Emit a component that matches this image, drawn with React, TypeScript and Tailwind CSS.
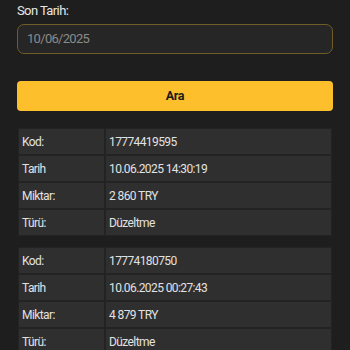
const records = [
  { kod: '17774419595', tarih: '10.06.2025 14:30:19', miktar: '2 860 TRY', turu: 'Düzeltme' },
  { kod: '17774180750', tarih: '10.06.2025 00:27:43', miktar: '4 879 TRY', turu: 'Düzeltme' },
];

function RecordTable({ r }: { r: (typeof records)[number] }) {
  const rows = [
    ['Kod:', r.kod],
    ['Tarih', r.tarih],
    ['Miktar:', r.miktar],
    ['Türü:', r.turu],
  ];
  return (
    <div className="mx-[18px] grid grid-cols-[85px_1fr] gap-[2px] bg-[#232323] p-[1px]">
      {rows.map(([label, value]) => (
        <div key={label} className="contents">
          <div className="flex h-[25px] items-center bg-[#2f2f2f] pl-[3px] text-[12px] tracking-[-0.6px] text-[#e2e2e2]">{label}</div>
          <div className="flex h-[25px] items-center bg-[#2f2f2f] pl-[3px] text-[12px] tracking-[-0.6px] text-[#e2e2e2]">{value}</div>
        </div>
      ))}
    </div>
  );
}

export default function App() {
  return (
    <div className="min-h-screen bg-[#1e1e1e] pt-[2px] font-['Roboto',sans-serif]">
      <div className="px-[17px]">
        <p className="text-[13px] leading-[18px] tracking-[-0.6px] text-[#e6e6e6]">Son Tarih:</p>
        <div className="mt-[4px] flex h-[30px] items-center rounded-[7px] border border-[#6f5c26] bg-[#262626] px-[9px] text-[13px] tracking-[-0.7px] text-[#8a8a8a]">
          10/06/2025
        </div>
        <button className="mt-[27px] flex h-[30px] w-full items-center justify-center rounded-[4px] bg-[#fdbf2c] text-[12.5px] font-bold tracking-[-0.4px] text-[#1a1a1a]">
          Ara
        </button>
      </div>
      <div className="mt-[17px] flex flex-col gap-[11px]">
        {records.map((r) => (
          <RecordTable key={r.kod} r={r} />
        ))}
      </div>
    </div>
  );
}
